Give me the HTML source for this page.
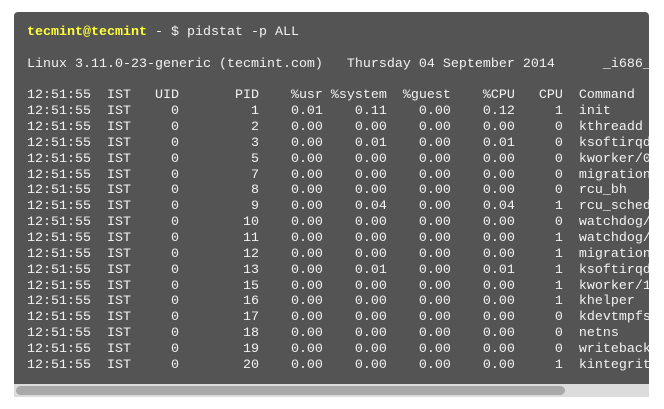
<!DOCTYPE html>
<html><head><style>
html,body{margin:0;padding:0;background:#fff;width:664px;height:409px;overflow:hidden}
.term{position:absolute;left:14px;top:12px;width:635px;height:372px;background:#545454;border-radius:4px 4px 0 0;overflow:hidden}
pre{margin:0;position:absolute;left:13px;top:13px;font-family:"Liberation Mono",monospace;font-size:13.33px;line-height:15.85px;color:#f2f2f2;white-space:pre}
.u{color:#ffff3c;font-weight:bold}
.track{position:absolute;left:14px;top:384px;width:635px;height:13px;background:#dcdcdc}
.thumb{position:absolute;left:2px;top:2px;width:549px;height:9px;background:#a9a9a9;border-radius:5px}
</style></head><body>
<div class="term"><pre><span class="u">tecmint@tecmint</span> - $ pidstat -p ALL

Linux 3.11.0-23-generic (tecmint.com)   Thursday 04 September 2014      _i686_

12:51:55  IST   UID       PID    %usr %system  %guest    %CPU   CPU  Command
12:51:55  IST     0         1    0.01    0.11    0.00    0.12     1  init
12:51:55  IST     0         2    0.00    0.00    0.00    0.00     0  kthreadd
12:51:55  IST     0         3    0.00    0.01    0.00    0.01     0  ksoftirqd/0
12:51:55  IST     0         5    0.00    0.00    0.00    0.00     0  kworker/0:0H
12:51:55  IST     0         7    0.00    0.00    0.00    0.00     0  migration/0
12:51:55  IST     0         8    0.00    0.00    0.00    0.00     0  rcu_bh
12:51:55  IST     0         9    0.00    0.04    0.00    0.04     1  rcu_sched
12:51:55  IST     0        10    0.00    0.00    0.00    0.00     0  watchdog/0
12:51:55  IST     0        11    0.00    0.00    0.00    0.00     1  watchdog/1
12:51:55  IST     0        12    0.00    0.00    0.00    0.00     1  migration/1
12:51:55  IST     0        13    0.00    0.01    0.00    0.01     1  ksoftirqd/1
12:51:55  IST     0        15    0.00    0.00    0.00    0.00     1  kworker/1:0H
12:51:55  IST     0        16    0.00    0.00    0.00    0.00     1  khelper
12:51:55  IST     0        17    0.00    0.00    0.00    0.00     0  kdevtmpfs
12:51:55  IST     0        18    0.00    0.00    0.00    0.00     0  netns
12:51:55  IST     0        19    0.00    0.00    0.00    0.00     0  writeback
12:51:55  IST     0        20    0.00    0.00    0.00    0.00     1  kintegrityd</pre></div>
<div class="track"><div class="thumb"></div></div>
</body></html>
